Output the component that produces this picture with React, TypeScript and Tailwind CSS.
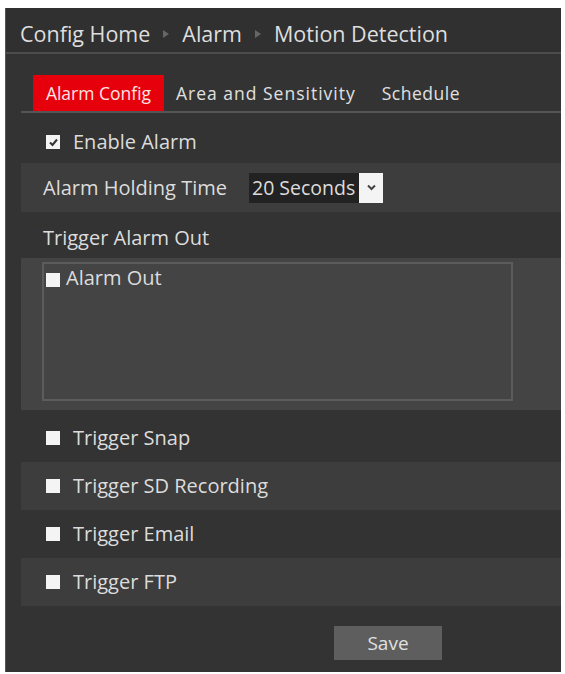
import React from "react";

const font = { fontFamily: '"Open Sans", "Noto Sans", sans-serif' };

function Box({ checked }: { checked?: boolean }) {
  return (
    <span className="inline-flex w-[14px] h-[14px] bg-[#f4f4f4] items-center justify-center shrink-0">
      {checked && (
        <svg width="11" height="11" viewBox="0 0 11 11">
          <path d="M2 5.5 L4.5 8 L9 2.5" stroke="#333" strokeWidth="2" fill="none" />
        </svg>
      )}
    </span>
  );
}

function Sep() {
  return (
    <svg width="8" height="10" viewBox="0 0 8 10" className="mx-[12px]">
      <path d="M1 1 L7 5 L1 9 Z" fill="#666666" />
    </svg>
  );
}

function CheckRow({ label, band }: { label: string; band?: boolean }) {
  return (
    <div className={`h-[48px] flex items-center pl-[25px] gap-[13px] ${band ? "bg-[#3d3d3d]" : ""}`}>
      <Box />
      <span className="text-[20px] leading-[24px] text-[#dcdcdc]">{label}</span>
    </div>
  );
}

export default function App() {
  return (
    <div className="w-[565px] h-[674px] bg-white pt-[8px] pl-[5px]" style={font}>
      <div className="w-[556px] h-[664px] bg-[#333333] flex flex-col border-l border-[#555]">
        <div className="h-[46px] shrink-0 flex items-center pl-[14px] pt-[8px] text-[21.5px] leading-[28px] text-[#dedede] border-b-2 border-[#4c4c4c] bg-[#303030]">
          <span>Config Home</span>
          <Sep />
          <span>Alarm</span>
          <Sep />
          <span>Motion Detection</span>
        </div>
        <div className="ml-[15px] mt-[21px] flex items-stretch h-[38px] shrink-0 border-b-2 border-[#555] text-[17.5px] leading-[24px]">
          <div className="ml-[12px] w-[131px] bg-[#e6000b] text-[#ffe4e4] flex items-center justify-center">
            Alarm Config
          </div>
          <div className="ml-[12px] flex items-center text-[#e0e0e0] tracking-[1px]">Area and Sensitivity</div>
          <div className="ml-[26px] flex items-center text-[#e0e0e0] tracking-[0.5px]">Schedule</div>
        </div>
        <div className="ml-[15px] flex flex-col">
          <div className="h-[50px] flex items-center pl-[25px] gap-[13px] pt-[8px]">
            <Box checked />
            <span className="text-[20px] leading-[24px] text-[#dcdcdc]">Enable Alarm</span>
          </div>
          <div className="h-[49px] flex items-center pl-[22px] bg-[#3d3d3d]">
            <span className="text-[20px] leading-[24px] text-[#dcdcdc] w-[206px]">Alarm Holding Time</span>
            <div className="flex items-stretch h-[30px]">
              <div className="w-[110px] bg-[#222] text-[#dcdcdc] text-[19.5px] leading-[24px] flex items-center pl-[3px] whitespace-nowrap overflow-hidden">
                20 Seconds
              </div>
              <div className="w-[24px] bg-[#f4f4f4] flex items-center justify-center">
                <svg width="9" height="7" viewBox="0 0 9 7">
                  <path d="M1 1.5 L4.5 5 L8 1.5" stroke="#444" strokeWidth="2" fill="none" />
                </svg>
              </div>
            </div>
          </div>
          <div className="h-[46px] flex items-center pl-[22px] pt-[6px] text-[20px] leading-[24px] text-[#dcdcdc]">
            Trigger Alarm Out
          </div>
          <div className="h-[152px] bg-[#444444] pl-[21px] pt-[4px]">
            <div className="w-[471px] h-[139px] border-2 border-[#5c5c5c] pl-[2px] pt-[3px] flex items-start gap-[6px]">
              <span className="mt-[2px]"><Box /></span>
              <span className="text-[20px] text-[#dcdcdc] leading-[22px]">Alarm Out</span>
            </div>
          </div>
          <div className="h-[4px]" />
          <CheckRow label="Trigger Snap" />
          <CheckRow label="Trigger SD Recording" band />
          <CheckRow label="Trigger Email" />
          <CheckRow label="Trigger FTP" band />
          <div className="flex pt-[20px] pl-[313px]">
            <div className="w-[108px] h-[34px] bg-[#5e5e5e] text-[#e0e0e0] text-[19px] leading-[24px] flex items-center justify-center">
              Save
            </div>
          </div>
        </div>
      </div>
    </div>
  );
}
